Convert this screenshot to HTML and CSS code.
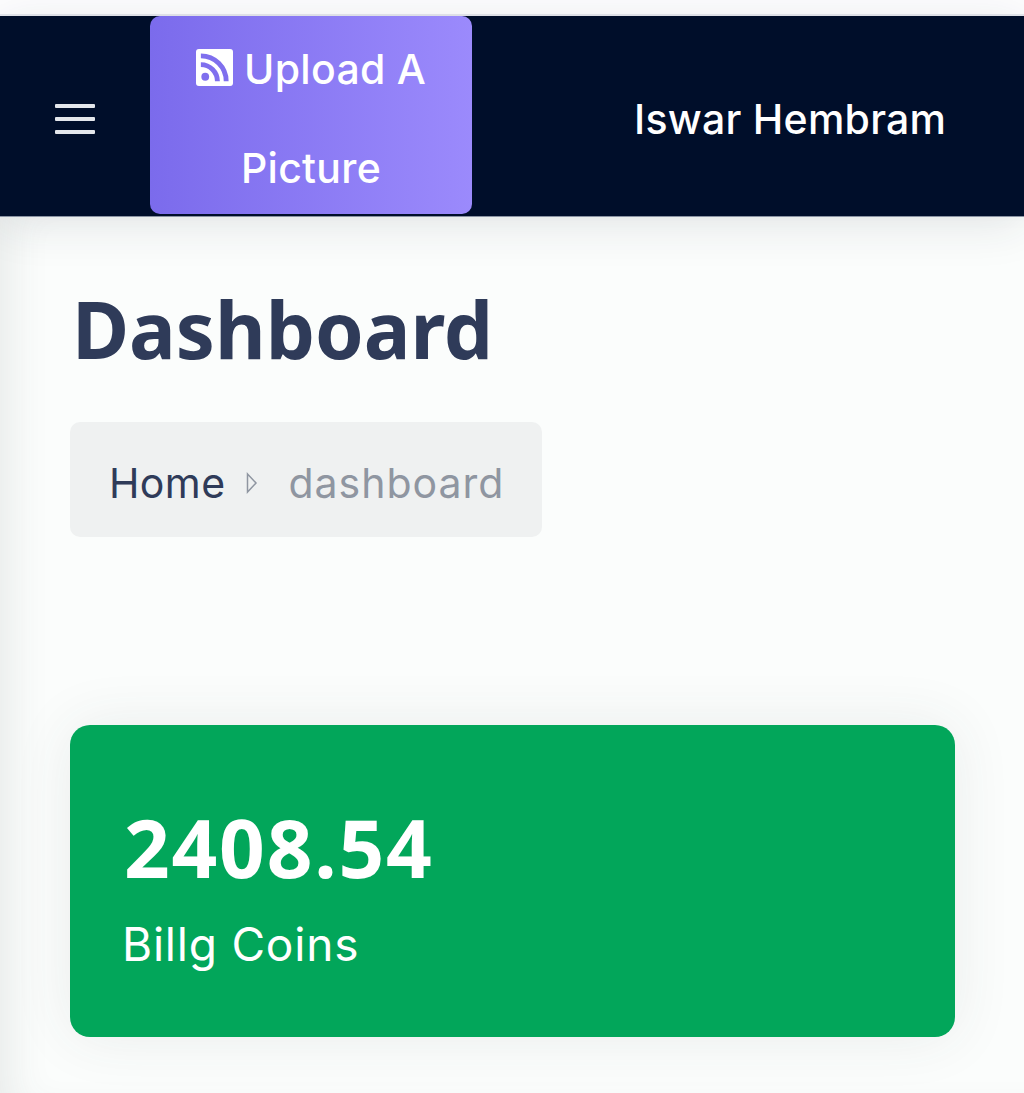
FILE: index.html
```html
<!DOCTYPE html>
<html lang="en">
<head>
<meta charset="utf-8">
<title>Dashboard</title>
<link rel="stylesheet" href="styles.css">
</head>
<body>
<div class="top-strip"></div>
<header class="navbar">
  <button class="menu-toggle" aria-label="Menu"><span></span><span></span><span></span></button>
  <a class="upload-btn" href="#">
    <svg class="rss-icon" viewBox="0 0 38 38" aria-hidden="true">
      <rect width="38" height="38" rx="3" fill="#fff"/>
      <circle cx="9.500" cy="28.500" r="4" fill="#7f6fee"/>
      <path d="M5 16a17 17 0 0 1 17 17M5 7a26 26 0 0 1 26 26" fill="none" stroke="#7f6fee" stroke-width="5"/>
    </svg>
    <span>Upload A Picture</span>
  </a>
  <div class="user-name">Iswar Hembram</div>
</header>
<main class="content">
  <h1 class="page-title">Dashboard</h1>
  <nav class="breadcrumb">
    <span class="crumb-home">Home</span>
    <svg class="crumb-sep" viewBox="0 0 12 22" aria-hidden="true"><path d="M1.500 2 10 11 1.500 20Z" fill="none" stroke="#8f96a1" stroke-width="1.500"/></svg>
    <span class="crumb-current">dashboard</span>
  </nav>
  <section class="coin-card">
    <div class="coin-value">2408.54</div>
    <div class="coin-label">Billg Coins</div>
  </section>
</main>
</body>
</html>
```
FILE: styles.css
```css
* { box-sizing: border-box; }
html, body { margin: 0; padding: 0; }
body {
  width: 1024px;
  height: 1093px;
  overflow: hidden;
  background: #fbfdfc;
  font-family: "Inter", "Liberation Sans", sans-serif;
  display: flex;
  flex-direction: column;
}
.top-strip {
  height: 16px;
  background: #fdfdfe;
  border-bottom: 2px solid #e6e8ee;
  flex: none;
}
.navbar {
  flex: none;
  height: 201px;
  background: #000e2a;
  display: flex;
  align-items: flex-start;
  padding: 0 0 0 55px;
  border-bottom: 1px solid #8a93a3;
  box-shadow: 0 8px 44px rgba(40, 50, 60, 0.11);
  position: relative;
}
.menu-toggle {
  background: none;
  border: 0;
  padding: 0;
  margin: 88px 0 0 0;
  width: 40px;
  height: 30px;
  display: flex;
  flex-direction: column;
  justify-content: space-between;
  flex: none;
}
.menu-toggle span {
  display: block;
  height: 4px;
  border-radius: 1px;
  background: #e4e7ec;
}
.upload-btn {
  flex: none;
  margin-left: 55px;
  width: 322px;
  height: 198px;
  border-radius: 10px;
  background: linear-gradient(90deg, #7b6bec 0%, #9b8afc 100%);
  color: #fff;
  font-size: 41px;
  font-weight: 500;
  line-height: 99px;
  letter-spacing: 0.3px;
  text-align: center;
  text-decoration: none;
  padding: 4px 30px 0;
}
.rss-icon {
  width: 37px;
  height: 37px;
  vertical-align: -2px;
}
.user-name {
  margin: 79px 0 0 162px;
  color: #fff;
  font-size: 41px;
  font-weight: 500;
  line-height: 48px;
  letter-spacing: 0.25px;
  white-space: nowrap;
}
.content {
  flex: 1;
  padding: 62px 69px 0 70px;
  box-shadow: inset 34px 0 40px -24px rgba(60, 70, 70, 0.1);
}
.page-title {
  margin: 0 0 0 2px;
  color: #2f3b59;
  font-family: "Noto Sans", "Liberation Sans", sans-serif;
  font-size: 78px;
  font-weight: 700;
  line-height: 100px;
}
.breadcrumb {
  margin-top: 43px;
  width: 472px;
  height: 115px;
  background: #eff1f1;
  border-radius: 10px;
  display: flex;
  align-items: center;
  padding: 6px 0 0 39px;
  font-size: 41px;
}
.crumb-home { color: #2f3b59; letter-spacing: 0.4px; }
.crumb-sep { width: 12px; height: 22px; margin: 0 30px 0 21px; flex: none; }
.crumb-current { color: #8f96a1; letter-spacing: 1px; }
.coin-card {
  margin-top: 188px;
  width: 885px;
  height: 312px;
  background: #02a65a;
  border-radius: 20px;
  box-shadow: 0 0 60px rgba(60, 70, 70, 0.09);
  padding: 72px 52px 0;
  color: #fff;
}
.coin-value {
  font-family: "Noto Sans", "Liberation Sans", sans-serif;
  font-size: 80px;
  font-weight: 700;
  line-height: 100px;
  letter-spacing: 1.8px;
  margin-left: 2px;
}
.coin-label {
  font-size: 46px;
  line-height: 60px;
  margin-top: 17px;
  letter-spacing: 0.8px;
}
```
